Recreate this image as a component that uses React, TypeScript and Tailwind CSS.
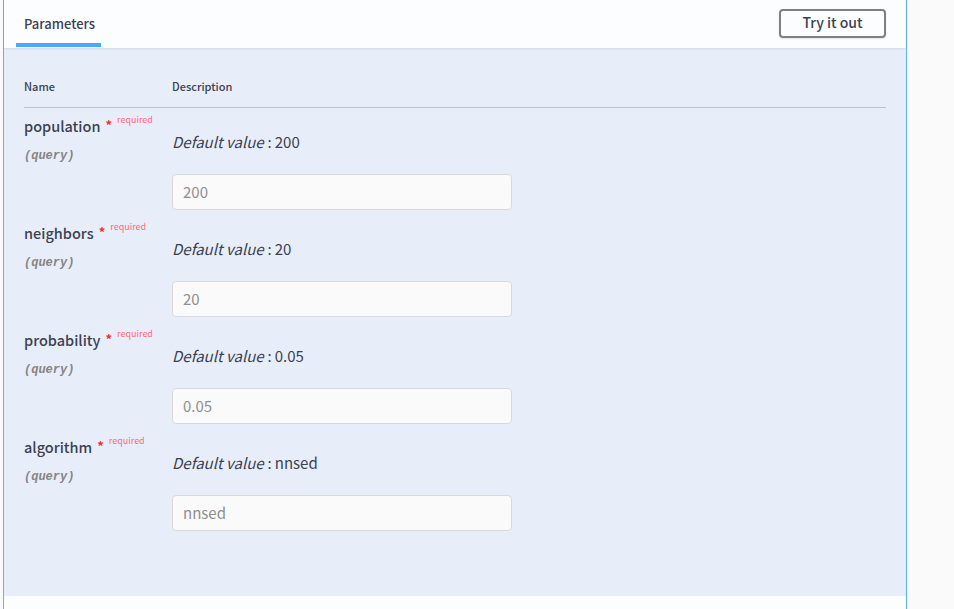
import React from "react";

const params = [
  { name: "population", def: "200" },
  { name: "neighbors", def: "20" },
  { name: "probability", def: "0.05" },
  { name: "algorithm", def: "nnsed" },
];

export default function App() {
  return (
    <div
      className="w-[954px] h-[609px] bg-[#fafafa] flex overflow-hidden"
      style={{ fontFamily: '"Noto Sans CJK KR", "Noto Sans", sans-serif' }}
    >
      <div className="ml-[3px] w-[904px] h-full border-x border-[#61affe] flex flex-col bg-white">
        {/* header */}
        <div className="h-[48px] shrink-0 bg-[#fcfdff] shadow-[0_1px_2px_rgba(0,0,0,0.1)] flex items-start justify-between pl-[20px] pr-[20px] relative z-10">
          <div className="relative h-full flex items-center">
            <span className="text-[13px] font-medium text-[#3b4151] leading-[18px]">Parameters</span>
            <div className="absolute left-[-8px] right-[-6px] bottom-[1px] h-[4px] bg-[#49a8ff]" />
          </div>
          <button className="mt-[9px] w-[107px] h-[29px] pb-[3px] border-2 border-[#808080] rounded-[4px] text-[14px] font-medium text-[#3b4151] leading-[18px] flex items-center justify-center shadow-[0_1px_2px_rgba(0,0,0,0.1)]">
            Try it out
          </button>
        </div>
        {/* body */}
        <div className="flex-1 bg-[#e8eef9] px-[20px] pt-[30px] pb-[60px]">
          <div className="flex border-b border-[#bcc3cf] pb-[13px] text-[11px] font-medium text-[#3b4151] leading-[16px]">
            <div className="w-[148px]">Name</div>
            <div>Description</div>
          </div>
          {params.map((p) => (
            <div key={p.name} className="flex h-[107px]">
              <div className="w-[148px] pt-[8px]">
                <div className="flex items-start leading-[20px]">
                  <span className="text-[14.5px] font-medium text-[#3b4151]">{p.name}</span>
                  <span className="text-[13px] text-[#ff2a2a] font-bold ml-[5px] mt-[-1px]">*</span>
                  <span className="text-[9px] text-[#ff6b6b] ml-[5px] mt-[-6px]">required</span>
                </div>
                <div
                  className="mt-[12px] text-[12px] italic font-bold text-[#858585] leading-[16px]"
                  style={{ fontFamily: '"Liberation Mono", monospace' }}
                >
                  (query)
                </div>
              </div>
              <div className="pt-[24px]">
                <div className="text-[15px] text-[#3b4151] leading-[20px]">
                  <span className="italic">Default value</span>
                  <span className="ml-[4px] mr-[3px]">:</span>
                  {p.def}
                </div>
                <div className="mt-[22px] w-[340px] h-[36px] bg-[#fafafa] border border-[#d9d9d9] rounded-[4px] flex items-center pl-[10px] text-[15px] text-[#8f8f8f] leading-[20px]">
                  {p.def}
                </div>
              </div>
            </div>
          ))}
        </div>
        <div className="h-[13px] shrink-0 bg-[#fcfdff]" />
      </div>
    </div>
  );
}
